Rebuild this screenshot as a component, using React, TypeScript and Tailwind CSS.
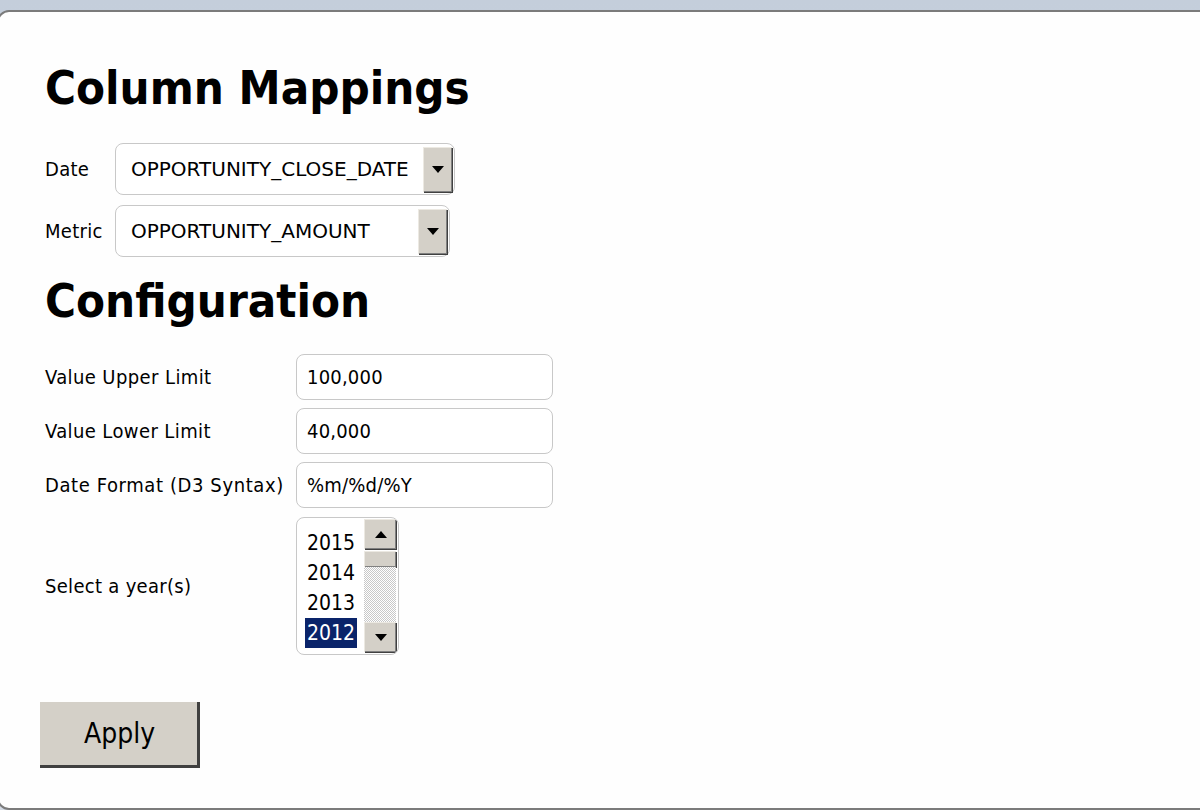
function Arrow({ up = false }: { up?: boolean }) {
  return (
    <svg width="12" height="7" viewBox="0 0 12 7" className="block">
      {up ? <polygon points="0,7 12,7 6,0" fill="#000" /> : <polygon points="0,0 12,0 6,7" fill="#000" />}
    </svg>
  );
}

function Bevel({ className = "", children }: { className?: string; children?: React.ReactNode }) {
  return (
    <div className={`bg-[#d4d0c8] border-t border-l border-t-[#ece9e2] border-l-[#ece9e2] shadow-[inset_-1px_-1px_0_#808080,1px_1px_0_#404040] flex items-center justify-center ${className}`}>
      {children}
    </div>
  );
}

function Select({ value, width }: { value: string; width: string }) {
  return (
    <div className={`${width} h-[52px] rounded-[8px] border border-[#c8c8c8] bg-white flex items-center pl-[15px] pr-[2px]`}>
      <span className="flex-1 text-[20px] leading-none whitespace-nowrap font-['DejaVu_Sans',sans-serif] font-stretch-normal">{value}</span>
      <Bevel className="w-[29px] h-[45px]">
        <Arrow />
      </Bevel>
    </div>
  );
}

function TextInput({ value }: { value: string }) {
  return (
    <div className="w-[257px] h-[46px] rounded-[8px] border border-[#c8c8c8] bg-white flex items-center pl-[10px] text-[20px] leading-none tracking-[0.2px]">
      {value}
    </div>
  );
}

export default function App() {
  return (
    <div className="w-[1200px] h-[810px] overflow-hidden bg-gradient-to-b from-[#c4cedb] to-[#d3dae4] pt-[10px]">
      <div className="h-[800px] w-[1230px] -ml-[3px] bg-[#fefefe] border-2 border-[#7b7b7b] rounded-[12px] pl-[46px] pt-[49px] text-black font-['DejaVu_Sans_Condensed','DejaVu_Sans',sans-serif] font-stretch-condensed">
        <h1 className="text-[47px] font-bold leading-[54px]">Column Mappings</h1>

        <div className="mt-[28px] flex flex-col gap-[10px]">
          <div className="flex items-center">
            <span className="w-[70px] text-[20px] leading-none tracking-[0.3px]">Date</span>
            <Select value="OPPORTUNITY_CLOSE_DATE" width="w-[340px]" />
          </div>
          <div className="flex items-center">
            <span className="w-[70px] text-[20px] leading-none tracking-[0.3px]">Metric</span>
            <Select value="OPPORTUNITY_AMOUNT" width="w-[335px]" />
          </div>
        </div>

        <h1 className="mt-[17px] text-[47px] font-bold leading-[54px]">Configuration</h1>

        <div className="mt-[26px] grid grid-cols-[251px_auto] gap-y-[8px] items-center justify-start text-[20px] leading-none">
          <span className="tracking-[0.4px]">Value Upper Limit</span>
          <TextInput value="100,000" />
          <span className="tracking-[0.4px]">Value Lower Limit</span>
          <TextInput value="40,000" />
          <span className="tracking-[0.6px]">Date Format (D3 Syntax)</span>
          <TextInput value="%m/%d/%Y" />
          <span className="mt-[1px] tracking-[0.3px]">Select a year(s)</span>
          <div className="mt-[1px] w-[103px] h-[138px] rounded-[8px] border border-[#c8c8c8] bg-white flex overflow-hidden">
            <div className="flex-1 flex flex-col pt-[10px] pl-[8px] text-[21px]">
              {["2015", "2014", "2013", "2012"].map((y, i) => (
                <div key={y} className="h-[30px] flex items-center">
                  <span className={`pl-[2px] pr-[2px] h-[30px] flex items-center ${i === 3 ? "bg-[#0a246a] text-white" : ""}`}>{y}</span>
                </div>
              ))}
            </div>
            <div className="w-[34px] flex flex-col pr-[2px] pt-[1px] pb-[2px]">
              <Bevel className="h-[30px] w-full"><Arrow up /></Bevel>
              <Bevel className="h-[16px] w-full mt-[2px]" />
              <div className="flex-1 bg-[repeating-conic-gradient(#c8c8c8_0_25%,#ffffff_0_50%)] bg-[length:2px_2px]" />
              <Bevel className="h-[30px] w-full"><Arrow /></Bevel>
            </div>
          </div>
        </div>

        <button className="mt-[47px] -ml-[5px] w-[160px] h-[66px] bg-[#d4d0c8] border-r-[3px] border-b-[3px] border-r-[#404040] border-b-[#404040] text-[28px] leading-none pl-[2px] font-['DejaVu_Sans_Condensed','DejaVu_Sans',sans-serif]">
          Apply
        </button>
      </div>
    </div>
  );
}
